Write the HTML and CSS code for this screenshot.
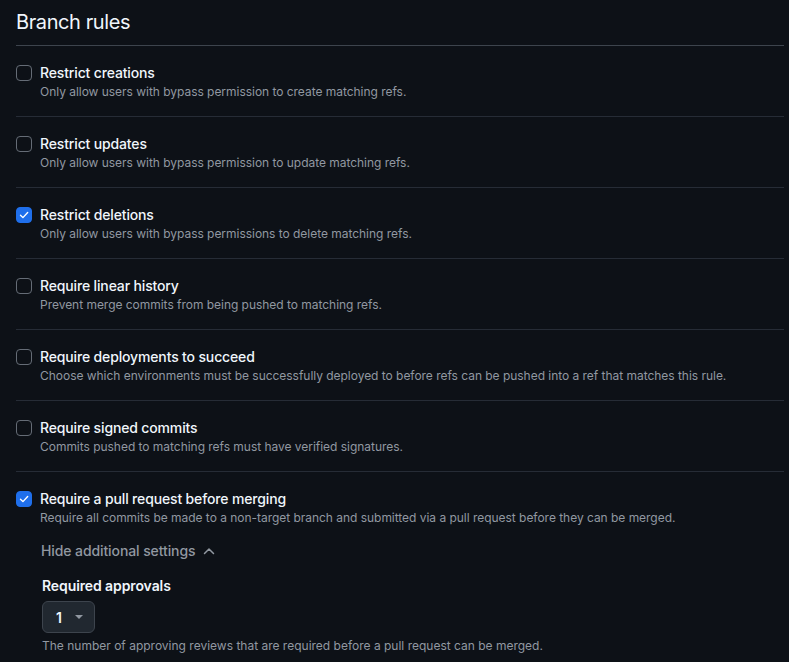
FILE: index.html
```html
<!DOCTYPE html>
<html>
<head>
<meta charset="utf-8">
<link rel="stylesheet" href="styles.css">
</head>
<body>
<div class="page">
  <h2 class="heading">Branch rules</h2>
  <ul class="rules">
    <li class="rule">
      <span class="box"></span>
      <div class="text"><div class="title">Restrict creations</div><div class="desc">Only allow users with bypass permission to create matching refs.</div></div>
    </li>
    <li class="rule">
      <span class="box"></span>
      <div class="text"><div class="title">Restrict updates</div><div class="desc">Only allow users with bypass permission to update matching refs.</div></div>
    </li>
    <li class="rule">
      <span class="box checked"><svg viewBox="0 0 16 16" width="16" height="16"><path d="M4 8.2 L6.8 11 L12.2 5.2" fill="none" stroke="#fff" stroke-width="1.6" stroke-linecap="round" stroke-linejoin="round"/></svg></span>
      <div class="text"><div class="title">Restrict deletions</div><div class="desc">Only allow users with bypass permissions to delete matching refs.</div></div>
    </li>
    <li class="rule">
      <span class="box"></span>
      <div class="text"><div class="title">Require linear history</div><div class="desc">Prevent merge commits from being pushed to matching refs.</div></div>
    </li>
    <li class="rule">
      <span class="box"></span>
      <div class="text"><div class="title">Require deployments to succeed</div><div class="desc">Choose which environments must be successfully deployed to before refs can be pushed into a ref that matches this rule.</div></div>
    </li>
    <li class="rule">
      <span class="box"></span>
      <div class="text"><div class="title">Require signed commits</div><div class="desc">Commits pushed to matching refs must have verified signatures.</div></div>
    </li>
    <li class="rule last">
      <span class="box checked"><svg viewBox="0 0 16 16" width="16" height="16"><path d="M4 8.2 L6.8 11 L12.2 5.2" fill="none" stroke="#fff" stroke-width="1.6" stroke-linecap="round" stroke-linejoin="round"/></svg></span>
      <div class="text">
        <div class="title">Require a pull request before merging</div>
        <div class="desc">Require all commits be made to a non-target branch and submitted via a pull request before they can be merged.</div>
        <div class="toggle">Hide additional settings <svg class="chev" viewBox="0 0 16 16" width="16" height="16"><path d="M3.5 10.5 L8 6 L12.5 10.5" fill="none" stroke="#9198a1" stroke-width="1.5" stroke-linecap="round" stroke-linejoin="round"/></svg></div>
        <div class="setting">
          <div class="label">Required approvals</div>
          <div class="select"><span class="val">1</span><span class="caret"></span></div>
          <div class="note">The number of approving reviews that are required before a pull request can be merged.</div>
        </div>
      </div>
    </li>
  </ul>
</div>
</body>
</html>
```

FILE: styles.css
```css
html, body {
  margin: 0;
  padding: 0;
  background: #0d1117;
  color: #f0f6fc;
  font-family: Inter, "Noto Sans", sans-serif;
  height: 100%;
  overflow: hidden;
}
.page {
  padding: 0 5px 0 16px;
}
.heading {
  margin: 0;
  font-size: 20px;
  font-weight: 400;
  letter-spacing: -0.4px;
  line-height: 30px;
  padding: 7px 0 8px;
  border-bottom: 1px solid #3d444d;
}
.rules {
  list-style: none;
  margin: 0;
  padding: 0;
}
.rule {
  display: flex;
  gap: 8px;
  padding: 17px 0 15px;
  border-bottom: 1px solid #262c36;
}
.rule.last {
  border-bottom: none;
}
.box {
  flex: none;
  width: 16px;
  height: 16px;
  box-sizing: border-box;
  border: 1px solid #656c76;
  border-radius: 4px;
  margin-top: 2px;
  display: flex;
  align-items: center;
  justify-content: center;
}
.box.checked {
  background: #1f6feb;
  border-color: #1f6feb;
}
.box svg { display: block; }
.title {
  font-size: 14px;
  font-weight: 500;
  letter-spacing: -0.15px;
  line-height: 20px;
}
.desc {
  font-size: 12px;
  line-height: 18px;
  letter-spacing: -0.03px;
  color: #9198a1;
}
.toggle {
  margin-top: 14px;
  display: flex;
  align-items: center;
  gap: 6px;
  font-size: 14px;
  font-weight: 500;
  letter-spacing: -0.1px;
  line-height: 20px;
  color: #9198a1;
  padding-left: 1px;
}
.chev { display: block; }
.setting {
  padding-left: 2px;
  margin-top: 15px;
}
.label {
  font-size: 14px;
  font-weight: 600;
  letter-spacing: -0.1px;
  line-height: 20px;
}
.select {
  margin-top: 5px;
  width: 53px;
  height: 32px;
  box-sizing: border-box;
  background: #212830;
  border: 1px solid #3d444d;
  border-radius: 6px;
  display: flex;
  align-items: center;
  padding-left: 13px;
  gap: 13px;
}
.val {
  font-size: 14px;
  font-weight: 600;
}
.caret {
  width: 0;
  height: 0;
  border-left: 4px solid transparent;
  border-right: 4px solid transparent;
  border-top: 4px solid #9198a1;
}
.note {
  margin-top: 4px;
  font-size: 12px;
  line-height: 18px;
  color: #9198a1;
}
```
